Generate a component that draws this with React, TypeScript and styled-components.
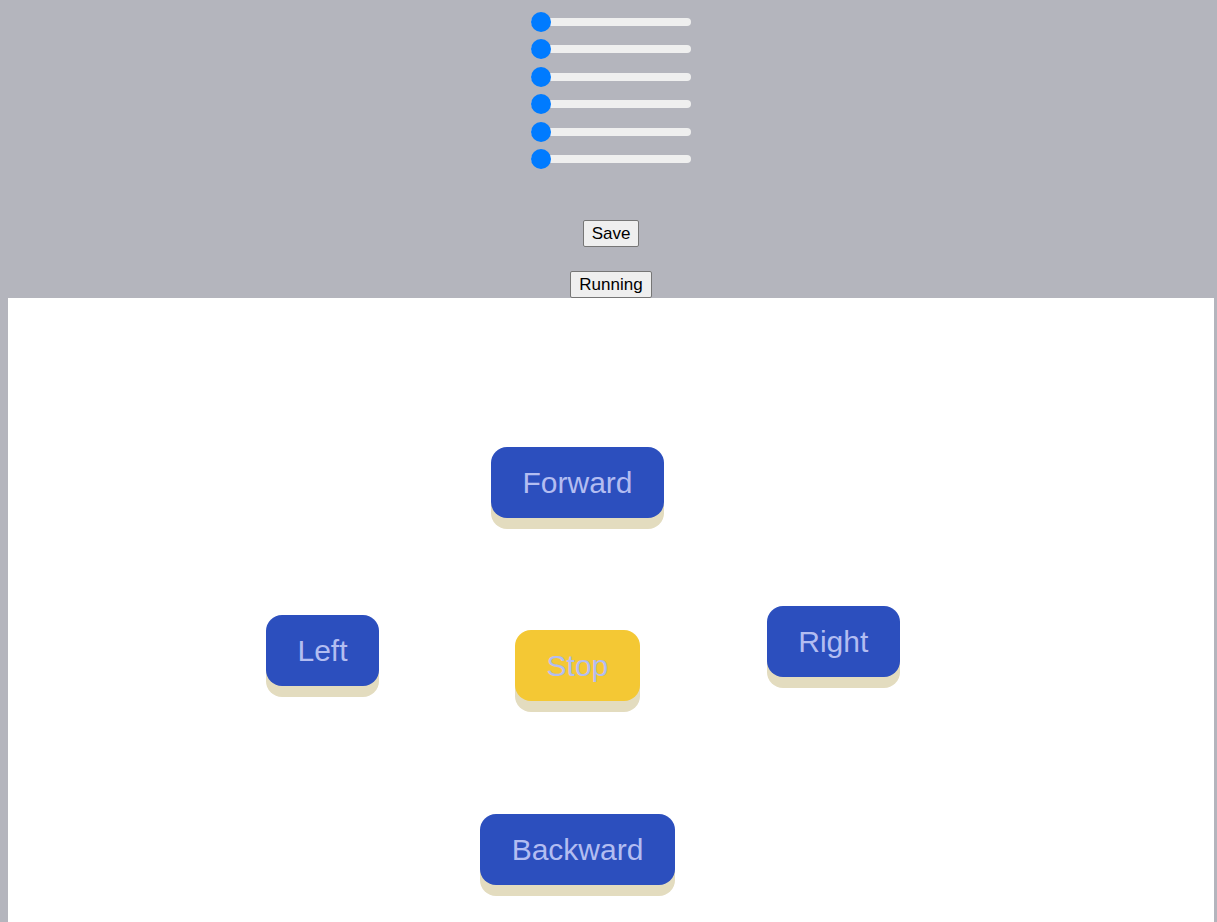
import React from 'react';
import styled, { createGlobalStyle } from 'styled-components';

const GlobalStyle = createGlobalStyle`
  body {
    margin: 8px 0 0 8px;
    background: #b4b5bd;
    font-family: "Liberation Sans", Arial, sans-serif;
  }
`;

const sliders = [0, 1, 2, 3, 4, 5];

const App: React.FC = () => {
  return (
    <Page>
      <GlobalStyle />
      <Settings>
        <Sliders>
          {sliders.map((i) => (
            <Slider key={i} type="range" min={0} max={100} defaultValue={0} />
          ))}
        </Sliders>
        <PlainButton $top={57}>Save</PlainButton>
        <PlainButton $top={24}>Running</PlainButton>
      </Settings>

      <Pad>
        <Stack>
          <DriveButton>Forward</DriveButton>
          <MiddleRow>
            <DriveButton $left={258} $top={9}>Left</DriveButton>
            <DriveButton $left={136} $top={24} $stop>Stop</DriveButton>
            <DriveButton $left={127}>Right</DriveButton>
          </MiddleRow>
          <DriveButton $top={113}>Backward</DriveButton>
        </Stack>
      </Pad>
    </Page>
  );
};

const Page = styled.div`
  width: 1206px;
`;

const Settings = styled.div`
  display: flex;
  flex-direction: column;
  align-items: center;
`;

const Sliders = styled.div`
  display: flex;
  flex-direction: column;
  gap: 19.4px;
  padding-top: 10px;
`;

const Slider = styled.input`
  -webkit-appearance: none;
  appearance: none;
  width: 160px;
  height: 8px;
  margin: 0;
  border-radius: 5px;
  background: #efefef;
  outline: none;

  &::-webkit-slider-thumb {
    -webkit-appearance: none;
    appearance: none;
    width: 20px;
    height: 20px;
    border-radius: 50%;
    background: #007bff;
    cursor: pointer;
  }
`;

const PlainButton = styled.button<{ $top: number }>`
  margin-top: ${({ $top }) => $top}px;
  padding: 3px 8px;
  font-family: "Liberation Sans", Arial, sans-serif;
  font-size: 17px;
  line-height: 19px;
  color: #000;
  background: #efefef;
  border: 1px solid #767676;
  border-radius: 2px;
`;

const Pad = styled.div`
  background: #fff;
  height: 624px;
  padding-top: 149px;
  box-sizing: border-box;
`;

const Stack = styled.div`
  width: 1139px;
  display: flex;
  flex-direction: column;
  align-items: center;
`;

const MiddleRow = styled.div`
  align-self: stretch;
  display: flex;
  align-items: flex-start;
  margin-top: 88px;
`;

const DriveButton = styled.button<{ $left?: number; $top?: number; $stop?: boolean }>`
  margin-left: ${({ $left = 0 }) => $left}px;
  margin-top: ${({ $top = 0 }) => $top}px;
  padding: 18px 31.5px;
  font-family: "Liberation Sans", Arial, sans-serif;
  font-size: 30px;
  line-height: 35px;
  color: #b3bdf1;
  background: ${({ $stop }) => ($stop ? '#f4c834' : '#2c4fbe')};
  border: none;
  border-radius: 16px;
  box-shadow: 0 11px 0 #e3dcbf;
  cursor: pointer;
  white-space: nowrap;
`;

export default App;
